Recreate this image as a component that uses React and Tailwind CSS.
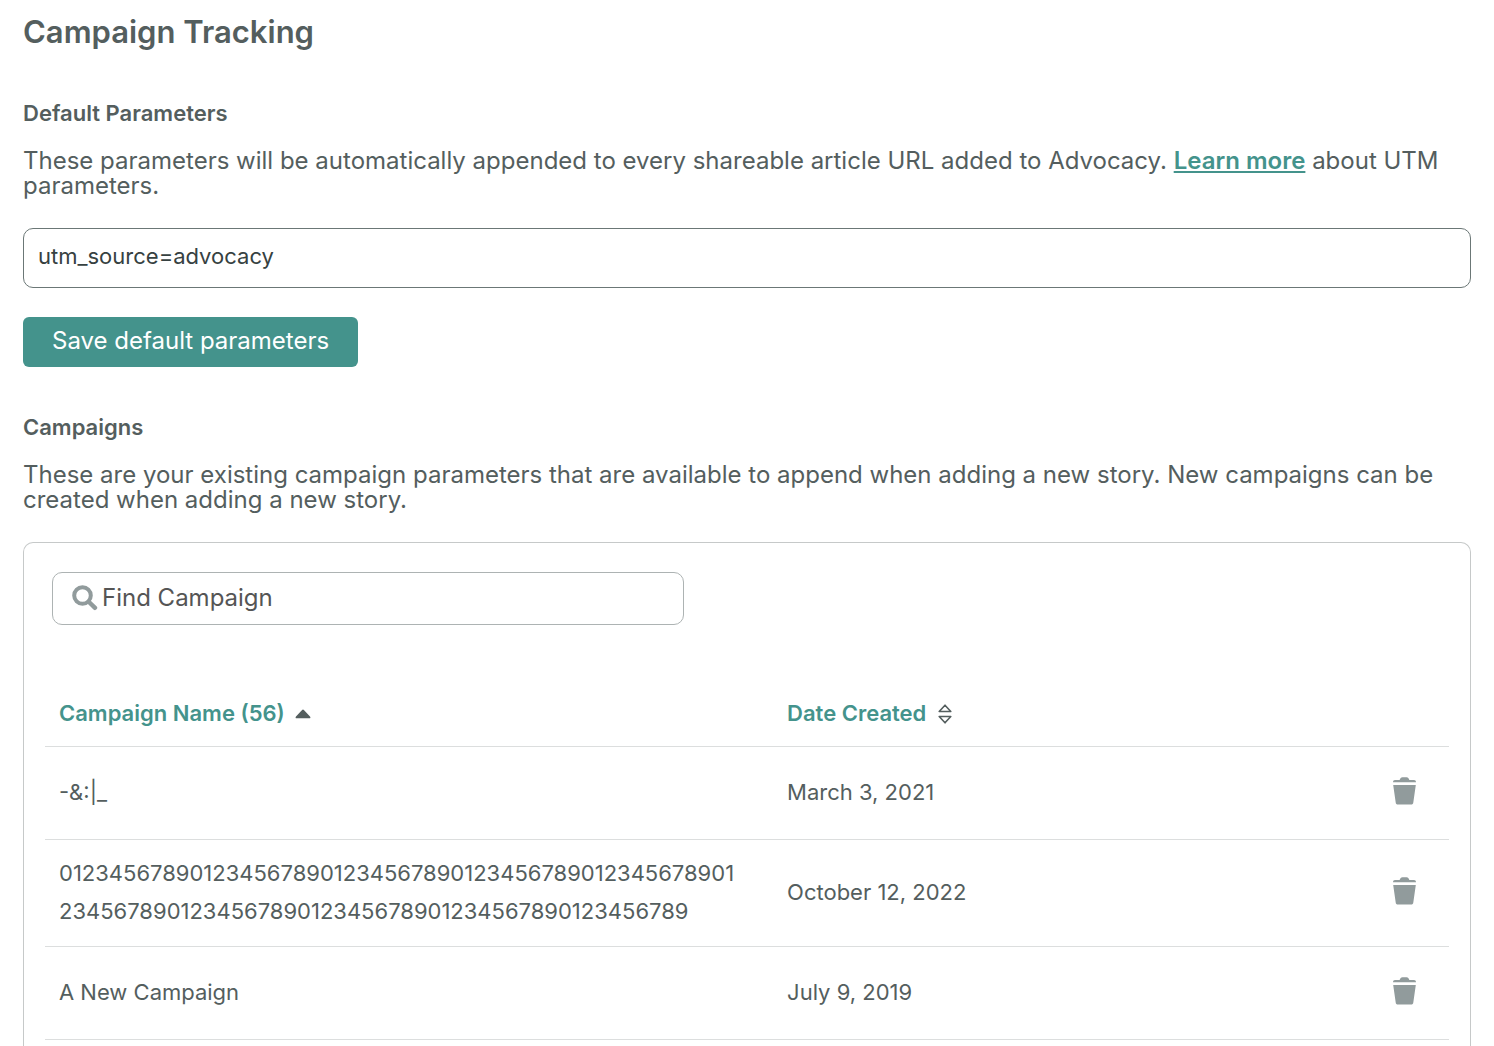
import React, { useState } from 'react'

const campaigns = [
  { id: 1, name: '-&:|_', created: 'March 3, 2021' },
  { id: 2, name: '0123456789'.repeat(10), created: 'October 12, 2022' },
  { id: 3, name: 'A New Campaign', created: 'July 9, 2019' },
]

function SearchIcon() {
  return (
    <svg viewBox="0 0 26 26" className="h-[26px] w-[26px] shrink-0" fill="none" stroke="#919b9c" aria-hidden="true">
      <circle cx="10.5" cy="10.5" r="8.3" strokeWidth="4" />
      <path d="M17 17l6 5.8" strokeWidth="4.4" strokeLinecap="round" />
    </svg>
  )
}

function TrashIcon() {
  return (
    <svg viewBox="0 0 23 28" className="h-7 w-[23px]" fill="#919b9c" aria-hidden="true">
      <path d="M0 5.2C0 4 .8 3.1 2 3.1H6.600C7.200 1.200 8 .2 9.400.2h4.200C15 .2 15.800 1.200 16.400 3.100H21c1.200 0 2 .9 2 2.100z" />
      <path d="M.2 8h22.600L20.300 25.400c-.2 1.400-.9 2-2.300 2H5c-1.400 0-2.100-.6-2.300-2z" />
    </svg>
  )
}

function SortedIcon() {
  return (
    <svg viewBox="0 0 16 10" className="h-[10px] w-4" fill="#545e5e" aria-hidden="true">
      <path d="M8 .6c.4 0 .6.200.9.500l6.100 6.400c.8.900.5 1.800-.6 1.800H1.600c-1.100 0-1.400-.9-.6-1.800L7.100 1.100C7.400.8 7.600.6 8 .6z" />
    </svg>
  )
}

function SortIcon() {
  return (
    <svg viewBox="0 0 14 20" className="h-5 w-[14px]" fill="none" stroke="#545e5e" strokeWidth="1.600" strokeLinejoin="round" aria-hidden="true">
      <path d="M7 1.200L12.800 7.500H1.200z" />
      <path d="M7 18.800L12.800 12.500H1.200z" />
    </svg>
  )
}

export default function App() {
  const [params, setParams] = useState('utm_source=advocacy')
  const [query, setQuery] = useState('')
  const rows = campaigns.filter((c) => c.name.toLowerCase().includes(query.toLowerCase()))

  return (
    <main className="flex min-h-screen flex-col bg-white px-[23px] pt-3 font-['Inter',sans-serif] text-[#545e5e]">
      <h1 className="text-[31px] leading-10 font-semibold">Campaign Tracking</h1>

      <section className="mt-[47px] flex flex-col items-start">
        <h2 className="text-[22px] leading-7 font-semibold">
          <label htmlFor="params">Default Parameters</label>
        </h2>
        <p className="mt-[21px] text-2xl leading-[25px]">
          These parameters will be automatically appended to every shareable article URL added to Advocacy.{' '}
          <a href="#utm" className="font-semibold text-[#44938c] underline decoration-2 underline-offset-2">Learn more</a> about UTM parameters.
        </p>
        <input
          id="params"
          type="text"
          value={params}
          onChange={(e) => setParams(e.target.value)}
          className="mt-[30px] h-[60px] w-full rounded-[10px] border border-[#6b7776] px-[14px] pb-1 text-[22px] text-[#364141] outline-none"
        />
        <button type="button" className="mt-[29px] h-[50px] rounded-md bg-[#44938c] px-[29px] pb-[2px] text-2xl text-white">
          Save default parameters
        </button>
      </section>

      <section className="mt-[46px] flex flex-1 flex-col">
        <h2 className="text-[22px] leading-7 font-semibold">Campaigns</h2>
        <p className="mt-[21px] text-2xl leading-[25px]">
          These are your existing campaign parameters that are available to append when adding a new story. New campaigns can be created when adding a new story.
        </p>

        <div className="mt-[30px] flex-1 rounded-t-[10px] border border-b-0 border-[#c6c9c9] px-[21px] pt-[29px]">
          <label className="ml-[7px] flex h-[53px] w-[45%] items-center rounded-[10px] border border-[#adb3b3] pr-4 pb-[2px] pl-[19px]">
            <SearchIcon />
            <input
              type="text"
              aria-label="Find Campaign"
              placeholder="Find Campaign"
              value={query}
              onChange={(e) => setQuery(e.target.value)}
              className="ml-1 w-full text-2xl outline-none placeholder:text-[#555]"
            />
          </label>

          <table className="mt-[55px] w-full table-fixed text-left text-[22px]">
            <thead>
              <tr className="h-[66px] border-b border-[#dcdede] text-[#44938c]">
                <th className="w-[52%] px-[14px] pt-[2px] font-semibold">
                  <button type="button" className="flex items-center gap-[10px]">Campaign Name (56) <SortedIcon /></button>
                </th>
                <th className="px-3 pt-[2px] font-semibold">
                  <button type="button" className="flex items-center gap-3">Date Created <SortIcon /></button>
                </th>
                <th className="w-[90px]"></th>
              </tr>
            </thead>
            <tbody>
              {rows.map((c) => (
                <tr key={c.id} className="h-[93px] border-b border-[#dcdede]">
                  <td className="pt-[14px] pr-7 pb-4 pl-[14px] leading-[38px] break-all">{c.name}</td>
                  <td className="px-3 pb-[2px] leading-[38px]">{c.created}</td>
                  <td className="pr-[33px] pb-1">
                    <button type="button" aria-label={`Delete ${c.name}`} className="ml-auto block">
                      <TrashIcon />
                    </button>
                  </td>
                </tr>
              ))}
            </tbody>
          </table>
        </div>
      </section>
    </main>
  )
}
